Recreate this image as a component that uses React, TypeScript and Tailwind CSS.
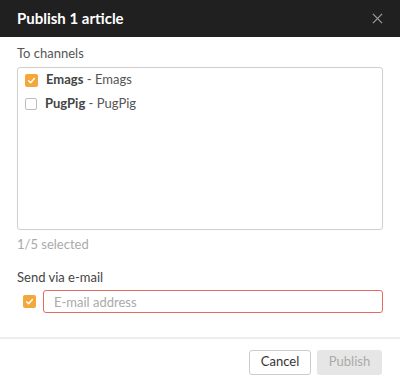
import React from 'react';

function Check({ checked }: { checked: boolean }) {
  if (!checked) {
    return <span className="w-[12px] h-[12px] rounded-[2px] border border-[#bdbdbd] bg-white flex-shrink-0" />;
  }
  return (
    <span className="w-[13px] h-[13px] rounded-[2px] bg-[#f4a83a] flex items-center justify-center flex-shrink-0">
      <svg width="9" height="9" viewBox="0 0 10 10" fill="none">
        <path d="M1.8 5.2l2.2 2.2 4.2-4.6" stroke="white" strokeWidth="1.6" strokeLinecap="round" strokeLinejoin="round" />
      </svg>
    </span>
  );
}

const channels = [
  { name: 'Emags', label: 'Emags', checked: true },
  { name: 'PugPig', label: 'PugPig', checked: false },
];

export default function App() {
  return (
    <div className="w-[400px] h-[385px] bg-white flex flex-col text-[13px] text-[#555]" style={{ fontFamily: 'Lato, "Open Sans", sans-serif' }}>
      <div className="h-[37px] bg-[#202020] flex items-center justify-between pl-[17px] pr-[17px] flex-shrink-0">
        <span className="text-white font-bold text-[15px]">Publish 1 article</span>
        <svg width="11" height="11" viewBox="0 0 12 12" fill="none">
          <path d="M1 1l10 10M11 1L1 11" stroke="#9a9a9a" strokeWidth="1.4" />
        </svg>
      </div>

      <div className="px-[17px] pt-[7px] flex flex-col flex-1">
        <div className="leading-[18px] h-[23px]">To channels</div>
        <div className="h-[163px] border border-[#cfcfcf] rounded-[3px] pl-[7px] flex flex-col">
          {channels.map((c) => (
            <label key={c.name} className="h-[24px] flex items-center gap-[8px]">
              <Check checked={c.checked} />
              <span>
                <span className="font-bold text-[#444]">{c.name}</span> - {c.label}
              </span>
            </label>
          ))}
        </div>
        <div className="mt-[5px] text-[#aaa] leading-[18px]">1/5 selected</div>

        <div className="mt-[15px] leading-[18px] text-[#444]">Send via e-mail</div>
        <div className="mt-[4px] flex items-center gap-[7px] pl-[6px]">
          <Check checked />
          <input
            className="flex-1 h-[23px] border border-[#e66b5f] rounded-[3px] px-[10px] text-[13px] outline-none placeholder:text-[#aaa]"
            placeholder="E-mail address"
          />
        </div>
      </div>

      <div className="border-t-2 border-[#ececec] h-[48px] flex items-center justify-end gap-[6px] pr-[18px] flex-shrink-0">
        <button className="h-[25px] w-[62px] border border-[#ccc] rounded-[3px] bg-white text-[#333] text-[13px]">Cancel</button>
        <button className="h-[25px] w-[65px] rounded-[3px] bg-[#e6e6e6] text-[#aaa] text-[13px]">Publish</button>
      </div>
    </div>
  );
}
